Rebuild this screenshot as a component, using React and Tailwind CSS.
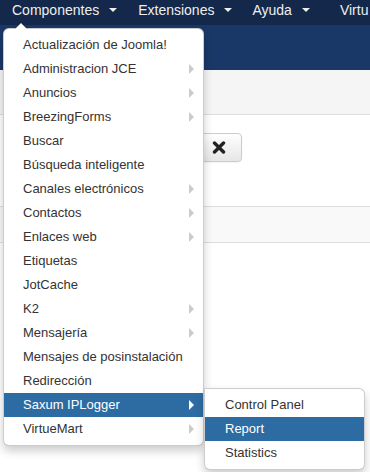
import React from "react";

const items = [
  { label: "Actualización de Joomla!" },
  { label: "Administracion JCE", sub: true },
  { label: "Anuncios", sub: true },
  { label: "BreezingForms", sub: true },
  { label: "Buscar" },
  { label: "Búsqueda inteligente" },
  { label: "Canales electrónicos", sub: true },
  { label: "Contactos", sub: true },
  { label: "Enlaces web", sub: true },
  { label: "Etiquetas" },
  { label: "JotCache" },
  { label: "K2", sub: true },
  { label: "Mensajería", sub: true },
  { label: "Mensajes de posinstalación" },
  { label: "Redirección" },
  { label: "Saxum IPLogger", sub: true, active: true },
  { label: "VirtueMart", sub: true },
];

const subItems = ["Control Panel", "Report", "Statistics"];

const NavCaret = () => (
  <span className="ml-[10px] inline-block h-0 w-0 border-x-[4px] border-t-[4px] border-x-transparent border-t-[#eeeeee]" />
);

const SubCaret = ({ active }) => (
  <span
    className={`absolute right-[9px] top-[7px] h-0 w-0 border-y-[5px] border-l-[5px] border-y-transparent ${
      active ? "border-l-white" : "border-l-[#cccccc]"
    }`}
  />
);

const App = () => {
  return (
    <div
      className="relative h-[472px] w-[370px] overflow-hidden bg-white"
      style={{ fontFamily: '"Liberation Sans", Arial, sans-serif' }}
    >
      {/* Top navbar */}
      <div className="flex h-[25px] items-start overflow-hidden bg-[#13284a] pl-[12px] text-[14px] leading-[20px] text-[#eeeeee]">
        <span className="flex shrink-0 items-center">
          Componentes
          <NavCaret />
        </span>
        <span className="ml-[21px] flex shrink-0 items-center">
          Extensiones
          <NavCaret />
        </span>
        <span className="ml-[20px] flex shrink-0 items-center">
          Ayuda
          <NavCaret />
        </span>
        <span className="ml-[30px] shrink-0">Virtu</span>
      </div>

      {/* Header bar */}
      <div className="h-[45px] bg-[#1a3867]" />

      {/* Subhead */}
      <div className="h-[45px] border-b border-[#dddddd] bg-[#f5f5f5]" />

      {/* Toolbar area */}
      <div className="h-[91px] pt-[18px]">
        <button className="ml-[196px] flex h-[29px] w-[46px] items-center justify-center rounded-[4px] border border-[#cccccc] bg-gradient-to-b from-white to-[#e6e6e6] shadow-[0_1px_2px_rgba(0,0,0,0.05)]">
          <svg width="14" height="13" viewBox="0 0 14 13">
            <path
              d="M2.5 2 L11.5 11 M11.5 2 L2.5 11"
              stroke="#222"
              strokeWidth="3.4"
              strokeLinecap="round"
            />
          </svg>
        </button>
      </div>

      <div className="h-[37px] border-y border-[#dddddd] bg-[#f9f9f9]" />

      {/* Dropdown menu */}
      <div className="absolute left-[3px] top-[28px] w-[201px] rounded-[6px] border border-black/20 bg-white py-[4px] text-[13px] leading-[18px] text-[#333333] shadow-[0_5px_10px_rgba(0,0,0,0.2)]">
        <span className="absolute -top-[7px] left-[10px] h-0 w-0 border-x-[7px] border-b-[7px] border-x-transparent border-b-black/20" />
        <span className="absolute -top-[6px] left-[11px] h-0 w-0 border-x-[6px] border-b-[6px] border-x-transparent border-b-white" />
        {items.map((item) => (
          <div
            key={item.label}
            className={`relative h-[24px] py-[3px] pl-[19px] whitespace-nowrap ${
              item.active ? "bg-[#2d6ca2] text-white" : ""
            }`}
          >
            {item.label}
            {item.sub && <SubCaret active={item.active} />}
            {item.active && (
              <div className="absolute -top-[5px] left-[200px] w-[161px] rounded-b-[6px] rounded-tr-[6px] border border-black/20 bg-white py-[4px] text-[#333333] shadow-[0_5px_10px_rgba(0,0,0,0.2)]">
                {subItems.map((s) => (
                  <div
                    key={s}
                    className={`h-[24px] py-[3px] pl-[20px] ${
                      s === "Report" ? "bg-[#2d6ca2] text-white" : ""
                    }`}
                  >
                    {s}
                  </div>
                ))}
              </div>
            )}
          </div>
        ))}
      </div>
    </div>
  );
};

export default App;
